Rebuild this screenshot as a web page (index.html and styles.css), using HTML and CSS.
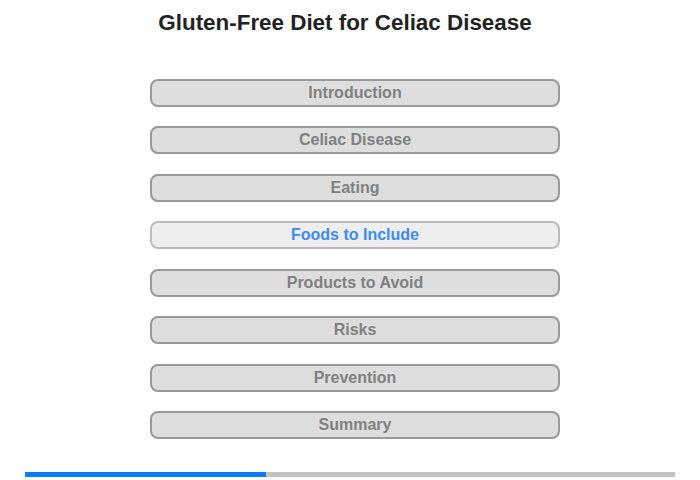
FILE: index.html
```html
<!DOCTYPE html>
<html lang="en">
<head>
  <meta charset="UTF-8">
  <meta name="viewport" content="width=device-width, initial-scale=1.0">
  <title>Gluten-Free Diet for Celiac Disease</title>
  <link rel="stylesheet" href="styles.css">
</head>
<body>
  <div id="page">
    <h1>Gluten-Free Diet for Celiac Disease</h1>
    <div id="menu">
      <button class="item">Introduction</button>
      <button class="item">Celiac Disease</button>
      <button class="item">Eating</button>
      <button class="item active">Foods to Include</button>
      <button class="item">Products to Avoid</button>
      <button class="item">Risks</button>
      <button class="item">Prevention</button>
      <button class="item">Summary</button>
    </div>
    <div id="progress">
      <div class="fill" style="width: 37.1%"></div>
    </div>
  </div>
</body>
</html>
```

FILE: styles.css
```css
body {
  margin: 0;
  background: white;
  font-family: "Liberation Sans", Arial, sans-serif;
}

#page {
  width: 700px;
  height: 480px;
  display: flex;
  flex-direction: column;
}

h1 {
  margin: 10px 10px 0 0;
  padding: 0;
  font-size: 22.4px;
  line-height: 25px;
  text-align: center;
  color: #222;
}

#menu {
  display: flex;
  flex-direction: column;
  align-items: center;
  gap: 19.45px;
  margin-top: 44px;
  padding-left: 10px;
}

.item {
  width: 410px;
  height: 28px;
  padding: 0;
  background-color: #dddddd;
  border: 2px solid #999999;
  border-radius: 8px;
  font-family: "Liberation Sans", Arial, sans-serif;
  font-size: 16px;
  font-weight: bold;
  color: #808080;
  cursor: pointer;
}

.item.active {
  background-color: #eeeeee;
  border-color: #bbbbbb;
  color: #3b8cf3;
}

#progress {
  margin: auto 25px 3px 25px;
  height: 5px;
  background-color: #c2c2c2;
}

#progress .fill {
  height: 100%;
  background-color: #0a7aff;
}
```
